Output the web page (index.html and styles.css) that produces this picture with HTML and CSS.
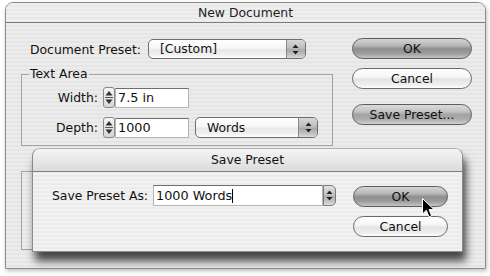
FILE: index.html
```html
<!DOCTYPE html>
<html>
<head>
<meta charset="utf-8">
<link rel="stylesheet" href="styles.css">
</head>
<body>
<div class="window">
  <div class="titlebar">New Document</div>
  <div class="body">
    <div class="left">
      <div class="preset-row">
        <span class="label">Document Preset:</span>
        <div class="popup preset-popup">
          <span class="popup-text">[Custom]</span>
          <span class="popup-arrows"><svg width="7" height="11" viewBox="0 0 7 11"><path d="M3.5 0.5 L6.5 4 L0.5 4 Z M3.5 10.5 L6.5 7 L0.5 7 Z" fill="#222"/></svg></span>
        </div>
      </div>
      <fieldset class="group">
        <legend>Text Area</legend>
        <div class="group-inner">
          <div class="field-row">
            <span class="flabel">Width:</span>
            <span class="stepper"><svg width="10" height="19" viewBox="0 0 10 19"><path d="M5 3 L8.5 7.5 L1.5 7.5 Z M5 16 L8.5 11.5 L1.5 11.5 Z" fill="#333"/><line x1="1" y1="9.5" x2="9" y2="9.5" stroke="#555"/></svg></span>
            <span class="tfield">7.5 in</span>
          </div>
          <div class="field-row row2">
            <span class="flabel">Depth:</span>
            <span class="stepper"><svg width="10" height="19" viewBox="0 0 10 19"><path d="M5 3 L8.5 7.5 L1.5 7.5 Z M5 16 L8.5 11.5 L1.5 11.5 Z" fill="#333"/><line x1="1" y1="9.5" x2="9" y2="9.5" stroke="#555"/></svg></span>
            <span class="tfield">1000</span>
            <div class="popup words-popup">
              <span class="popup-text">Words</span>
              <span class="popup-arrows"><svg width="7" height="11" viewBox="0 0 7 11"><path d="M3.5 0.5 L6.5 4 L0.5 4 Z M3.5 10.5 L6.5 7 L0.5 7 Z" fill="#222"/></svg></span>
            </div>
          </div>
        </div>
      </fieldset>
      <fieldset class="group group2"></fieldset>
    </div>
    <div class="right">
      <div class="btn btn-default">OK</div>
      <div class="btn btn-plain">Cancel</div>
      <div class="btn btn-gray save">Save Preset...</div>
    </div>
  </div>

  <div class="sheet">
    <div class="sheet-title">Save Preset</div>
    <div class="sheet-body">
      <span class="label sheet-label">Save Preset As:</span>
      <div class="combo">
        <span class="combo-field">1000 Words<span class="caret"></span></span>
        <span class="combo-btn"><svg width="7" height="11" viewBox="0 0 7 11"><path d="M3.5 0.5 L6.5 4 L0.5 4 Z M3.5 10.5 L6.5 7 L0.5 7 Z" fill="#222"/></svg></span>
      </div>
      <div class="sheet-buttons">
        <div class="btn btn-default">OK</div>
        <div class="btn btn-plain">Cancel</div>
      </div>
    </div>
  </div>

  <svg class="cursor" width="13" height="20" viewBox="0 0 13 20"><path d="M0.5 0.5 L0.5 16 L4.3 12.3 L7 18.8 L9.6 17.7 L7 11.6 L12 11.6 Z" fill="#000" stroke="#fff" stroke-width="1"/></svg>
</div>
</body>
</html>
```

FILE: styles.css
```css
* { box-sizing: border-box; }

html, body {
  margin: 0;
  padding: 0;
  background: #ffffff;
}

body {
  font-family: "DejaVu Sans", "Liberation Sans", sans-serif;
  font-size: 12.4px;
  color: #111;
  width: 490px;
  height: 276px;
  overflow: hidden;
}

.window {
  position: relative;
  margin: 2px 0 0 5px;
  width: 481px;
  height: 267px;
  border: 1px solid #8c8c8c;
  border-radius: 8px 8px 0 0;
  background: repeating-linear-gradient(to bottom, #ececec 0, #ececec 2px, #e5e5e5 2px, #e5e5e5 4px);
  box-shadow: 1px 2px 4px rgba(0, 0, 0, 0.25);
}

.titlebar {
  height: 20px;
  line-height: 19px;
  text-align: center;
  border-bottom: 1px solid #7c7c7c;
  border-radius: 7px 7px 0 0;
  color: #222;
  background: repeating-linear-gradient(to bottom, #efefef 0, #efefef 2px, #e8e8e8 2px, #e8e8e8 4px);
}

.body {
  display: flex;
  padding-top: 16px;
}

.left {
  padding-left: 15px;
  width: 329px;
}

.preset-row {
  display: flex;
  align-items: center;
  height: 20px;
  padding-left: 9px;
}

.label {
  white-space: nowrap;
}

.popup {
  display: flex;
  height: 20px;
  border: 1px solid #6e6e6e;
  border-radius: 5px;
  overflow: hidden;
  background: linear-gradient(to bottom, #ffffff 0%, #f6f6f6 45%, #e8e8e8 55%, #f2f2f2 85%, #ffffff 100%);
}

.preset-popup {
  margin-left: 7px;
  width: 158px;
}

.popup-text {
  flex: 1;
  line-height: 18px;
  padding-left: 11px;
}

.popup-arrows {
  width: 19px;
  display: flex;
  align-items: center;
  justify-content: center;
  border-left: 1px solid #8a8a8a;
  background: linear-gradient(to bottom, #d8d8d8 0%, #bdbdbd 45%, #a9a9a9 55%, #c4c4c4 85%, #dcdcdc 100%);
}

.group {
  margin: 7px 0 0 0;
  padding: 0;
  width: 312px;
  border: 1px solid #a2a2a2;
  min-width: 0;
}

.group legend {
  margin-left: 7px;
  padding: 0 1px;
  line-height: 16px;
}

.group-inner {
  padding: 5px 0 7px 0;
}

.field-row {
  display: flex;
  align-items: center;
  height: 21px;
}

.row2 {
  margin-top: 9px;
}

.flabel {
  width: 76px;
  text-align: right;
  margin-right: 5px;
}

.stepper {
  width: 12px;
  height: 21px;
  display: flex;
  align-items: center;
  justify-content: center;
  border: 1px solid #8a8a8a;
  border-radius: 3px;
  background: linear-gradient(to bottom, #f4f4f4, #d6d6d6);
}

.tfield {
  width: 74px;
  height: 20px;
  line-height: 18px;
  padding-left: 2px;
  background: #fff;
  border: 1px solid #b4b4b4;
  border-top-color: #6e6e6e;
  font-size: 12.8px;
}

.words-popup {
  margin-left: 6px;
  width: 123px;
  height: 21px;
}

.words-popup .popup-text {
  line-height: 19px;
  padding-left: 11px;
}

.group2 {
  margin-top: 25px;
  height: 79px;
}

.right {
  display: flex;
  flex-direction: column;
  margin-left: 17px;
  margin-top: -1px;
}

.btn {
  width: 120px;
  height: 21px;
  line-height: 19px;
  text-align: center;
  border: 1px solid #5e5e5e;
  border-radius: 11px;
  color: #111;
}

.btn-default {
  background: linear-gradient(to bottom, #d4d4d4 0%, #b6b6b6 35%, #8e8e8e 52%, #9c9c9c 75%, #c4c4c4 100%);
}

.btn-gray {
  background: linear-gradient(to bottom, #dcdcdc 0%, #c2c2c2 35%, #a2a2a2 52%, #acacac 75%, #d0d0d0 100%);
}

.btn-plain {
  background: linear-gradient(to bottom, #ffffff 0%, #f6f6f6 40%, #e4e4e4 55%, #f0f0f0 85%, #ffffff 100%);
  border-color: #6a6a6a;
}

.right .btn-plain {
  margin-top: 9px;
}

.right .save {
  margin-top: 15px;
}

.sheet {
  position: absolute;
  left: 26px;
  top: 145px;
  width: 431px;
  height: 104px;
  border: 1px solid #8a8a8a;
  border-top-color: #b0b0b0;
  border-radius: 8px 8px 0 0;
  background: repeating-linear-gradient(to bottom, #f2f2f2 0, #f2f2f2 2px, #ebebeb 2px, #ebebeb 4px);
  box-shadow: 3px 9px 9px rgba(0, 0, 0, 0.7);
}

.sheet-title {
  height: 23px;
  line-height: 21px;
  text-align: center;
  border-bottom: 1px solid #7e7e7e;
  border-radius: 7px 7px 0 0;
  background: linear-gradient(to bottom, #f4f4f4, #e6e6e6 60%, #dadada);
}

.sheet-body {
  display: flex;
  align-items: flex-start;
  padding: 13px 0 0 19px;
}

.sheet-label {
  line-height: 21px;
}

.combo {
  display: flex;
  margin-left: 5px;
  height: 21px;
}

.combo-field {
  width: 170px;
  height: 21px;
  line-height: 19px;
  padding-left: 2px;
  background: #fff;
  border: 1px solid #b4b4b4;
  border-top-color: #6e6e6e;
  font-size: 12.8px;
}

.caret {
  display: inline-block;
  width: 1px;
  height: 14px;
  background: #000;
  vertical-align: -3px;
}

.combo-btn {
  width: 13px;
  height: 21px;
  display: flex;
  align-items: center;
  justify-content: center;
  border: 1px solid #7a7a7a;
  border-radius: 0 5px 5px 0;
  background: linear-gradient(to bottom, #e4e4e4 0%, #c2c2c2 45%, #aeaeae 55%, #c8c8c8 85%, #e0e0e0 100%);
}

.sheet-buttons {
  display: flex;
  flex-direction: column;
  margin-left: 17px;
  margin-top: 1px;
}

.sheet-buttons .btn {
  width: 95px;
}

.sheet-buttons .btn-plain {
  margin-top: 9px;
}

.cursor {
  position: absolute;
  left: 416px;
  top: 195px;
}
```
